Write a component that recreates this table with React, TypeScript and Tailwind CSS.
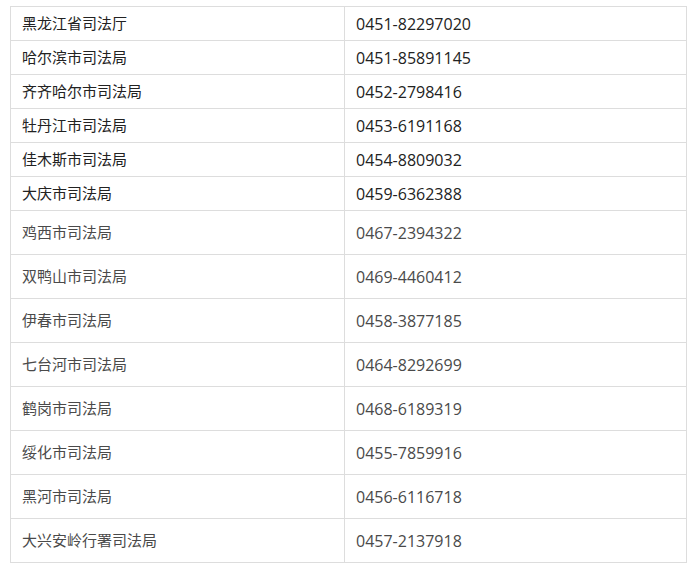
import React from "react";

const rows: [string, string][] = [
  ["黑龙江省司法厅", "0451-82297020"],
  ["哈尔滨市司法局", "0451-85891145"],
  ["齐齐哈尔市司法局", "0452-2798416"],
  ["牡丹江市司法局", "0453-6191168"],
  ["佳木斯市司法局", "0454-8809032"],
  ["大庆市司法局", "0459-6362388"],
  ["鸡西市司法局", "0467-2394322"],
  ["双鸭山市司法局", "0469-4460412"],
  ["伊春市司法局", "0458-3877185"],
  ["七台河市司法局", "0464-8292699"],
  ["鹤岗市司法局", "0468-6189319"],
  ["绥化市司法局", "0455-7859916"],
  ["黑河市司法局", "0456-6116718"],
  ["大兴安岭行署司法局", "0457-2137918"],
];

const App = () => {
  return (
    <div className="w-[700px] h-[568px] bg-white pl-[10px] pt-[6px] font-['Open_Sans','Noto_Sans_CJK_SC',sans-serif] text-[15px]">
      <div className="w-[677px] border-l border-t border-[#dddddd]">
        {rows.map(([name, phone], i) => {
          const tall = i >= 6;
          return (
            <div
              key={name}
              className={`flex border-b border-[#dddddd] ${tall ? "h-[44px] text-[#4a4a4a]" : "h-[34px] text-[#222222]"}`}
            >
              {/* 单位 */}
              <div className="w-[334px] flex items-center pl-[11px] border-r border-[#dddddd]">
                {name}
              </div>
              {/* 电话 */}
              <div className="flex-1 flex items-center pl-[11px] text-[16px] border-r border-[#dddddd]">
                {phone}
              </div>
            </div>
          );
        })}
      </div>
    </div>
  );
};

export default App;
